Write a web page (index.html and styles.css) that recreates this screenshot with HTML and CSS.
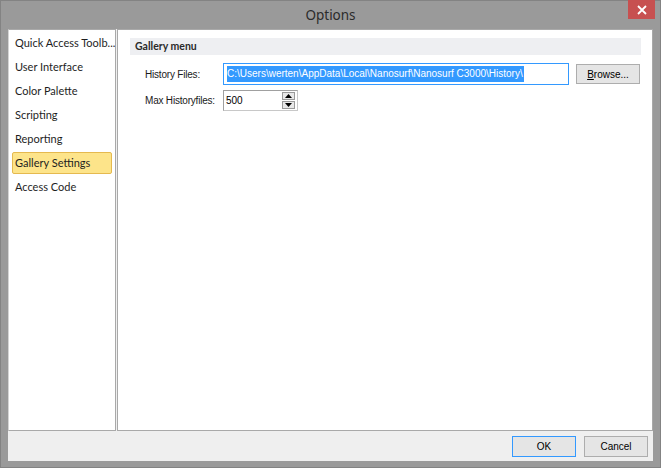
FILE: index.html
```html
<!DOCTYPE html>
<html>
<head>
<meta charset="utf-8">
<link rel="stylesheet" href="styles.css">
</head>
<body>
<div class="window">
  <div class="titlebar">
    <div class="title">Options</div>
    <div class="close">
      <svg width="10" height="10" viewBox="0 0 10 10"><path d="M1 1 L9 9 M9 1 L1 9" stroke="#fff" stroke-width="1.8"/></svg>
    </div>
  </div>
  <div class="client">
    <div class="panels">
      <ul class="nav">
        <li>Quick Access Toolb...</li>
        <li>User Interface</li>
        <li>Color Palette</li>
        <li>Scripting</li>
        <li>Reporting</li>
        <li class="active">Gallery Settings</li>
        <li>Access Code</li>
      </ul>
      <div class="content">
        <div class="section-head">Gallery menu</div>
        <div class="form">
          <div class="row">
            <span class="label">History Files:</span>
            <div class="textbox focused"><span class="sel">C:\Users\werten\AppData\Local\Nanosurf\Nanosurf C3000\History\</span></div>
            <button class="btn browse"><u>B</u>rowse...</button>
          </div>
          <div class="row">
            <span class="label">Max Historyfiles:</span>
            <div class="spin">
              <span class="val">500</span>
              <div class="arrows">
                <div class="arr"><svg width="7" height="4" viewBox="0 0 7 4"><path d="M3.5 0 L7 4 L0 4 Z" fill="#000"/></svg></div>
                <div class="arr"><svg width="7" height="4" viewBox="0 0 7 4"><path d="M0 0 L7 0 L3.5 4 Z" fill="#000"/></svg></div>
              </div>
            </div>
          </div>
        </div>
      </div>
    </div>
    <div class="footer">
      <button class="btn default">OK</button>
      <button class="btn">Cancel</button>
    </div>
  </div>
</div>
</body>
</html>
```
FILE: styles.css
```css
html, body {
  margin: 0;
  padding: 0;
}
body {
  width: 661px;
  height: 468px;
  overflow: hidden;
  background: #9a9a9a;
}
.window {
  box-sizing: border-box;
  width: 661px;
  height: 468px;
  border: 1px solid #838383;
  background: #9a9a9a;
  display: flex;
  flex-direction: column;
  padding: 0 7px 6px 7px;
}
.titlebar {
  height: 28px;
  position: relative;
  display: flex;
  align-items: center;
  justify-content: center;
}
.title {
  font-family: "Noto Sans", "Open Sans", sans-serif;
  font-size: 13.5px;
  color: #2b2b2b;
  margin-top: -1px;
}
.close {
  position: absolute;
  right: -2px;
  top: -1px;
  width: 27px;
  height: 19px;
  background: #c75050;
  display: flex;
  align-items: center;
  justify-content: center;
}
.client {
  flex: 1;
  background: #efefef;
  display: flex;
  flex-direction: column;
}
.panels {
  height: 402px;
  display: flex;
  gap: 1px;
}
.nav {
  list-style: none;
  margin: 0;
  padding: 2px 3px 0 3px;
  width: 108px;
  box-sizing: border-box;
  background: #fff;
  border: 1px solid #a9a9a9;
  border-left-color: #d4d4d4;
  font-family: Lato, "Noto Sans", sans-serif;
  font-size: 11px;
  color: #1e1e1e;
}
.nav li {
  height: 22px;
  line-height: 20px;
  margin-bottom: 2px;
  padding-left: 2px;
  box-sizing: border-box;
  border: 1px solid transparent;
  border-radius: 2px;
  white-space: nowrap;
}
.nav li.active {
  background: #fde48a;
  border-color: #e5b94f;
}
.content {
  flex: 1;
  background: #fff;
  border: 1px solid #a9a9a9;
  padding: 8px 11px 0 12px;
  font-family: "Liberation Sans", Arial, sans-serif;
  font-size: 10px;
  color: #000;
}
.section-head {
  background: #eeeff2;
  height: 17px;
  line-height: 17px;
  padding-left: 5px;
  font-family: Lato, "Noto Sans", sans-serif;
  font-weight: bold;
  font-size: 10.5px;
  color: #2a2a2a;
}
.form {
  padding: 8px 0 0 15px;
  display: flex;
  flex-direction: column;
  gap: 5px;
}
.row {
  display: flex;
  align-items: center;
}
.label {
  flex: none;
  width: 78px;
  white-space: nowrap;
  color: #1a1a1a;
  letter-spacing: -0.2px;
}
.textbox {
  flex: none;
  width: 346px;
  height: 22px;
  box-sizing: border-box;
  border: 1px solid #3399ff;
  background: #fff;
  padding: 2px 0 0 3px;
  white-space: nowrap;
  overflow: hidden;
}
.sel {
  background: #3399ff;
  color: #fff;
  line-height: 16px;
  display: inline-block;
  padding-right: 1px;
}
.btn {
  font-family: "Liberation Sans", Arial, sans-serif;
  font-size: 10px;
  color: #000;
  width: 64px;
  height: 20px;
  box-sizing: border-box;
  background: #e5e5e5;
  border: 1px solid #adadad;
  padding: 0;
  margin: 0;
}
.browse {
  margin-left: 7px;
}
.spin {
  flex: none;
  width: 75px;
  height: 21px;
  box-sizing: border-box;
  border: 1px solid #a0a0a0;
  border-right-color: #c8c8c8;
  border-bottom-color: #c8c8c8;
  background: #fff;
  display: flex;
  align-items: center;
  padding: 1px 1px 1px 2px;
}
.spin .val {
  flex: 1;
}
.arrows {
  width: 13px;
  height: 17px;
  display: flex;
  flex-direction: column;
  gap: 1px;
  margin-right: 1px;
}
.arr {
  flex: 1;
  background: #e8e8e8;
  border: 1px solid #9a9a9a;
  display: flex;
  align-items: center;
  justify-content: center;
}
.footer {
  flex: 1;
  display: flex;
  justify-content: flex-end;
  align-items: center;
  gap: 8px;
  padding-right: 5px;
}
.footer .btn {
  height: 21px;
}
.btn.default {
  border-color: #3399ff;
}
```
